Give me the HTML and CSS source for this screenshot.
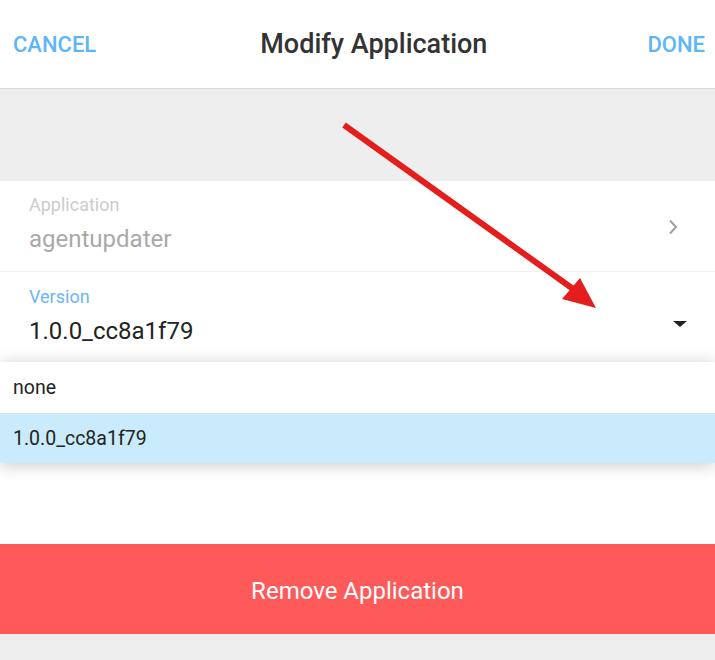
FILE: index.html
```html
<!DOCTYPE html>
<html>
<head>
<meta charset="utf-8">
<link rel="stylesheet" href="styles.css">
</head>
<body>
<div class="page">
  <header class="topbar">
    <span class="action">CANCEL</span>
    <span class="title">Modify Application</span>
    <span class="action">DONE</span>
  </header>
  <div class="spacer"></div>
  <section class="form">
    <div class="row">
      <div class="field">
        <div class="label">Application</div>
        <div class="value muted">agentupdater</div>
      </div>
      <svg class="chev" width="12" height="16" viewBox="0 0 12 16"><path d="M3 1.5 L9 8 L3 14.5" fill="none" stroke="#a0a0a0" stroke-width="2"/></svg>
    </div>
    <div class="row version">
      <div class="field">
        <div class="label blue">Version</div>
        <div class="value">1.0.0_cc8a1f79</div>
      </div>
      <svg class="caret" width="16" height="8" viewBox="0 0 16 8"><path d="M1 1 L15 1 L8 7 Z" fill="#222"/></svg>
    </div>
    <div class="menu">
      <div class="opt">none</div>
      <div class="opt sel">1.0.0_cc8a1f79</div>
    </div>
    <div class="gap"></div>
    <div class="remove">Remove Application</div>
  </section>
  <svg class="arrow" width="715" height="660" viewBox="0 0 715 660">
    <line x1="344" y1="125" x2="576" y2="291" stroke="#e41d1d" stroke-width="6" stroke-linecap="butt"/>
    <polygon points="562,299 580,278 596,308" fill="#e41d1d"/>
  </svg>
</div>
</body>
</html>
```

FILE: styles.css
```css
* { box-sizing: border-box; }
html, body { margin: 0; padding: 0; }
body {
  font-family: Roboto, "Noto Sans", sans-serif;
  background: #eeeeee;
  width: 715px;
  height: 660px;
  overflow: hidden;
}
.page { position: relative; width: 715px; height: 660px; }
.topbar {
  height: 89px;
  background: #fff;
  border-bottom: 1px solid #d9d9d9;
  display: flex;
  align-items: center;
  justify-content: space-between;
  padding: 0 10px 0 13px;
}
.action {
  color: #5cb6f7;
  font-size: 22px;
  font-weight: 500;
}
.title {
  color: #333;
  font-size: 27px;
  font-weight: 500;
  margin-left: 4px;
}
.spacer { height: 92px; }
.form { background: #fff; }
.row {
  height: 91px;
  display: flex;
  align-items: center;
  justify-content: space-between;
  padding: 0 36px 0 29px;
  border-bottom: 1px solid #f0f0f0;
}
.row.version { border-bottom: none; height: 90px; padding-right: 27px; }
.field { display: flex; flex-direction: column; }
.label { font-size: 18px; color: #cccccc; line-height: 20px; }
.label.blue { color: #6cb6f9; }
.value { font-size: 24px; color: #222; line-height: 28px; margin-top: 10px; }
.value.muted { color: #a9a9a9; }
.row:first-child .field { margin-top: -4px; }
.row.version .field { margin-top: -2px; }
.chev { margin-top: 2px; }
.caret { margin-top: 14px; }
.menu {
  position: relative;
  background: #fff;
  box-shadow: 0 2px 16px rgba(0,0,0,0.22);
  z-index: 2;
}
.opt {
  height: 51px;
  display: flex;
  align-items: center;
  padding-left: 13px;
  font-size: 19.5px;
  color: #222;
}
.opt.sel { background: #c9ebfc; height: 50px; }
.gap { height: 81px; }
.remove {
  height: 90px;
  background: #ff5a5a;
  color: #fff;
  font-size: 24px;
  padding-top: 3px;
  display: flex;
  align-items: center;
  justify-content: center;
}
.arrow { position: absolute; left: 0; top: 0; z-index: 3; }
```
